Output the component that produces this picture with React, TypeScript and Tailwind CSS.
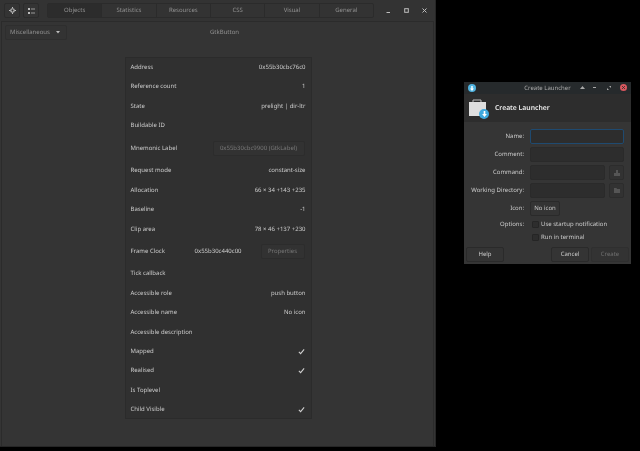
import React from "react";

const font = { fontFamily: '"Noto Sans", sans-serif' };

function Check() {
  return (
    <svg width="7" height="7" viewBox="0 0 8 8" fill="none" className="mr-[1px]">
      <path d="M1 4.5 L3 6.5 L7 1.5" stroke="#d0d0d0" strokeWidth="1.2" />
    </svg>
  );
}

function Row({ label, value, check }: { label: string; value?: string; check?: boolean }) {
  return (
    <div className="flex h-[19.45px] items-center justify-between px-[5px]">
      <span>{label}</span>
      {check ? <Check /> : value ? <span>{value}</span> : null}
    </div>
  );
}

const tabs = ["Objects", "Statistics", "Resources", "CSS", "Visual", "General"];

function Inspector() {
  return (
    <div className="absolute left-0 top-0 flex h-[447px] w-[436px] flex-col border-r border-b border-[#262626] bg-[#343434] text-[6px] text-[#cccccc]">
      <div className="flex h-[21px] items-center bg-[#333333] pl-[4px]">
        <div className="flex h-[15px] w-[16px] items-center justify-center rounded-[2px] border border-[#2b2b2b] bg-[#343434]">
          <svg width="7" height="7" viewBox="0 0 8 8">
            <circle cx="4" cy="4" r="2" fill="none" stroke="#bdbdbd" strokeWidth="1.4" />
            <path d="M4 0v1.5M4 6.5V8M0 4h1.5M6.5 4H8" stroke="#bdbdbd" strokeWidth="1.2" />
          </svg>
        </div>
        <div className="ml-[3px] flex h-[15px] w-[16px] items-center justify-center rounded-[2px] border border-[#2b2b2b] bg-[#343434]">
          <svg width="7" height="6" viewBox="0 0 7 6">
            <path d="M0 0h2v2H0zM0 4h2v2H0z" fill="#bdbdbd" />
            <path d="M3 .5h4v1H3zM3 4.5h4v1H3z" fill="#9a9a9a" />
          </svg>
        </div>
        <div className="ml-[8px] flex h-[15px] w-[327px] rounded-[2px] border border-[#2b2b2b] bg-[#333333] text-[#929292]">
          {tabs.map((t, i) => (
            <div
              key={t}
              className={
                i === 0
                  ? "flex flex-1 items-center justify-center border-r border-[#2b2b2b] bg-[#2c2c2c]"
                  : i === 5
                    ? "flex flex-1 items-center justify-center"
                    : "flex flex-1 items-center justify-center border-r border-[#2b2b2b]"
              }
            >
              {t}
            </div>
          ))}
        </div>
        <div className="ml-[12px] flex w-[41px] items-center justify-between">
          <svg width="5" height="5" viewBox="0 0 5 5"><path d="M.5 4h3.5v1H.5z" fill="#bdbdbd" /></svg>
          <svg width="5" height="5" viewBox="0 0 5 5"><rect x=".7" y=".7" width="3.6" height="3.6" fill="none" stroke="#bdbdbd" /></svg>
          <svg width="5" height="5" viewBox="0 0 5 5"><path d="M.5.5l4 4M4.500.5l-4 4" stroke="#bdbdbd" /></svg>
        </div>
      </div>
      <div className="relative mx-[1px] flex-1 border-t border-x border-[#2b2b2b]">
        <div className="mt-[2px] flex h-[16px] items-center pl-[3px]">
          <div className="flex h-[15px] w-[62px] items-center justify-between rounded-[2px] border border-[#2e2e2e] bg-[#333333] pl-[4px] pr-[6px] text-[#929292]">
            <span>Miscellaneous</span>
            <svg width="4" height="3" viewBox="0 0 4 3"><path d="M0 0h4L2 2.500z" fill="#bdbdbd" /></svg>
          </div>
          <div className="ml-[143px] text-[#929292]">GtkButton</div>
        </div>
        <div className="ml-[122.500px] mt-[16.500px] h-[362.500px] w-[187px] border border-[#2b2b2b] bg-[#303030]">
          <Row label="Address" value="0x55b30cbc76c0" />
          <Row label="Reference count" value="1" />
          <Row label="State" value="prelight | dir-ltr" />
          <Row label="Buildable ID" />
          <div className="flex h-[26px] items-center justify-between pl-[5px] pr-[6px]">
            <span>Mnemonic Label</span>
            <span className="flex h-[15px] w-[92px] items-center justify-center rounded-[2px] border border-[#2c2c2c] bg-[#323232] text-[#787878]">0x55b30cbc9900 (GtkLabel)</span>
          </div>
          <Row label="Request mode" value="constant-size" />
          <Row label="Allocation" value="66 × 34 +143 +235" />
          <Row label="Baseline" value="-1" />
          <Row label="Clip area" value="78 × 46 +137 +230" />
          <div className="flex h-[25px] items-center pl-[5px] pr-[6px]">
            <span className="flex-1">Frame Clock</span>
            <span className="mr-[19px]">0x55b30c440c00</span>
            <span className="flex h-[15px] w-[44px] items-center justify-center rounded-[2px] border border-[#2c2c2c] bg-[#323232] text-[#787878]">Properties</span>
          </div>
          <Row label="Tick callback" />
          <Row label="Accessible role" value="push button" />
          <Row label="Accessible name" value="No icon" />
          <Row label="Accessible description" />
          <Row label="Mapped" check />
          <Row label="Realised" check />
          <Row label="Is Toplevel" />
          <Row label="Child Visible" check />
        </div>
      </div>
    </div>
  );
}

function Field({ label, children }: { label: string; children?: React.ReactNode }) {
  return (
    <div className="flex h-[18px] items-center">
      <span className="w-[60px] shrink-0 text-right">{label}</span>
      <div className="ml-[6px] flex items-center">{children}</div>
    </div>
  );
}

const inputCls = "h-[15px] rounded-[2px] border border-[#2a2a2a] bg-[#2d2d2d]";

function Launcher() {
  return (
    <div className="absolute left-[464px] top-[82px] h-[182px] w-[167px] bg-[#353535] text-[6px] text-[#cccccc]">
      <div className="relative flex h-[12px] items-center justify-center bg-[#262a2c] text-[#acacac]">
        <div className="absolute left-[4px] top-[2px] flex h-[8px] w-[8px] items-center justify-center rounded-full bg-[#4fb3e0]">
          <svg width="4" height="5" viewBox="0 0 4 5"><path d="M1.300 0h1.400v2.500H4L2 5 0 2.500h1.300z" fill="#fff" /></svg>
        </div>
        <span>Create Launcher</span>
        <div className="absolute right-[4px] top-[2px] flex items-center">
          <svg width="5" height="5" viewBox="0 0 5 5" className="mr-[8px]"><path d="M2.500 1L5 4H0z" fill="#a8a8a8" /></svg>
          <div className="mr-[11px] h-[1px] w-[3px] bg-[#a8a8a8]" />
          <svg width="4" height="4" viewBox="0 0 4 4" className="mr-[9px]"><path d="M2 0h2v2zM0 2v2h2z" fill="#a8a8a8" /></svg>
          <div className="flex h-[7px] w-[7px] items-center justify-center rounded-full bg-[#d9575e]">
            <svg width="3" height="3" viewBox="0 0 3 3"><path d="M0 0l3 3M3 0L0 3" stroke="#2b2b2b" strokeWidth=".8" /></svg>
          </div>
        </div>
      </div>
      <div className="flex h-[28px] items-center bg-[#2d2d2d] pl-[4px]">
        <div className="relative h-[21px] w-[21px]">
          <svg width="20" height="19" viewBox="0 0 20 19">
            <path d="M5 4V2h8v2" fill="none" stroke="#bcbcbc" />
            <rect x="1" y="4" width="17" height="14" fill="#dfdfdf" />
          </svg>
          <div className="absolute bottom-0 right-0 flex h-[10px] w-[10px] items-center justify-center rounded-full bg-[#3fa9de]">
            <svg width="5" height="6" viewBox="0 0 4 5"><path d="M1.300 0h1.400v2.500H4L2 5 0 2.500h1.300z" fill="#fff" /></svg>
          </div>
        </div>
        <span className="ml-[6px] pt-[1px] text-[6.8px] font-semibold text-[#ececec]">Create Launcher</span>
      </div>
      <div className="flex flex-col pt-[5.500px]">
        <Field label="Name:">
          <div className="h-[15px] w-[94px] rounded-[2px] border border-[#1f4a70] bg-[#2d2d2d]" />
        </Field>
        <Field label="Comment:">
          <div className={inputCls + " w-[94px]"} />
        </Field>
        <Field label="Command:">
          <div className={inputCls + " w-[75px]"} />
          <div className="ml-[4px] flex h-[15px] w-[15px] items-center justify-center rounded-[2px] border border-[#2c2c2c] bg-[#323232]">
            <svg width="6" height="6" viewBox="0 0 6 6"><path d="M2 0h2v3h2v3H0V3h2z" fill="#555" /></svg>
          </div>
        </Field>
        <Field label="Working Directory:">
          <div className={inputCls + " w-[75px]"} />
          <div className="ml-[4px] flex h-[15px] w-[15px] items-center justify-center rounded-[2px] border border-[#2c2c2c] bg-[#323232]">
            <svg width="6" height="5" viewBox="0 0 6 5"><path d="M0 0h2.500l.5 1h3v4H0z" fill="#555" /></svg>
          </div>
        </Field>
        <Field label="Icon:">
          <div className="flex h-[15px] w-[30px] items-center justify-center rounded-[2px] border border-[#2a2a2a] bg-[#343434]">No icon</div>
        </Field>
        <div className="flex h-[13px] items-center pt-[1px]">
          <span className="w-[60px] shrink-0 text-right">Options:</span>
          <div className="ml-[8px] h-[7px] w-[7px] rounded-[1px] border border-[#252525] bg-[#2d2d2d]" />
          <span className="ml-[2px]">Use startup notification</span>
        </div>
        <div className="flex h-[13px] items-center">
          <div className="ml-[68px] h-[7px] w-[7px] rounded-[1px] border border-[#252525] bg-[#2d2d2d]" />
          <span className="ml-[2px]">Run in terminal</span>
        </div>
      </div>
      <div className="absolute inset-x-0 bottom-[2px] flex h-[15px] items-center px-[2px]">
        <div className="flex h-[15px] w-[38px] items-center justify-center rounded-[2px] border border-[#2a2a2a] bg-[#343434]">Help</div>
        <div className="ml-auto flex h-[15px] w-[38px] items-center justify-center rounded-[2px] border border-[#2a2a2a] bg-[#343434]">Cancel</div>
        <div className="ml-[2px] flex h-[15px] w-[38px] items-center justify-center rounded-[2px] border border-[#2f2f2f] bg-[#333333] text-[#707070]">Create</div>
      </div>
    </div>
  );
}

export default function App() {
  return (
    <div className="relative h-[451px] w-[640px] overflow-hidden bg-black blur-[0.3px] [text-rendering:geometricPrecision]" style={font}>
      <Inspector />
      <Launcher />
    </div>
  );
}
